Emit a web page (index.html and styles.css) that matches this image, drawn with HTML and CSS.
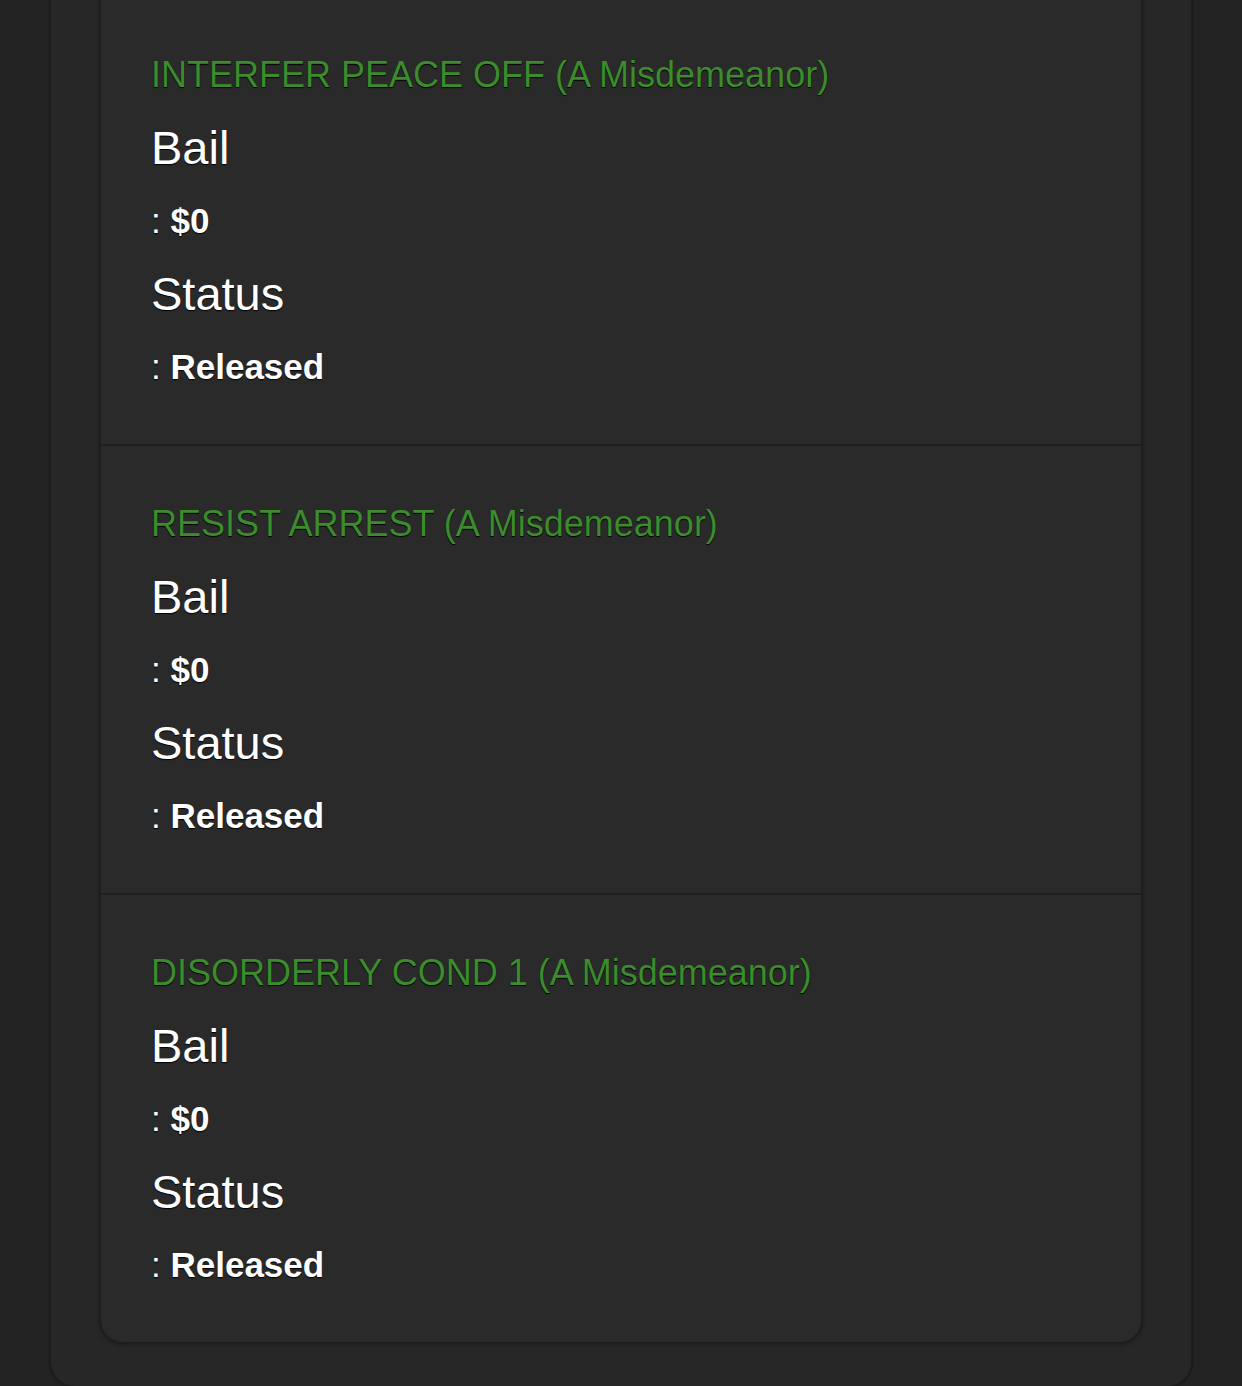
FILE: index.html
```html
<!DOCTYPE html>
<html>
<head>
<meta charset="utf-8">
<link rel="stylesheet" href="styles.css">
</head>
<body>
<div class="panel">
  <div class="card">
    <div class="charge">
      <div class="title">INTERFER PEACE OFF (A Misdemeanor)</div>
      <div class="label">Bail</div>
      <div class="value">: <strong>$0</strong></div>
      <div class="label">Status</div>
      <div class="value">: <strong>Released</strong></div>
    </div>
    <div class="charge">
      <div class="title">RESIST ARREST (A Misdemeanor)</div>
      <div class="label">Bail</div>
      <div class="value">: <strong>$0</strong></div>
      <div class="label">Status</div>
      <div class="value">: <strong>Released</strong></div>
    </div>
    <div class="charge">
      <div class="title">DISORDERLY COND 1 (A Misdemeanor)</div>
      <div class="label">Bail</div>
      <div class="value">: <strong>$0</strong></div>
      <div class="label">Status</div>
      <div class="value">: <strong>Released</strong></div>
    </div>
  </div>
</div>
</body>
</html>
```
FILE: styles.css
```css
html, body {
  margin: 0;
  padding: 0;
  background: #232323;
  font-family: "Liberation Sans", Arial, sans-serif;
}
.panel {
  margin: 0 49px;
  background: #272727;
  border: 2px solid #1c1c1c;
  border-top: none;
  border-radius: 0 0 26px 26px;
  padding: 0 48px 42px;
  box-shadow: 0 0 2px rgba(0,0,0,0.25);
}
.card {
  background: #2a2a2a;
  border: 2px solid #1e1e1e;
  border-top: none;
  border-radius: 0 0 24px 24px;
  box-shadow: 0 1px 4px rgba(0,0,0,0.3);
}
.charge {
  padding: 55px 50px 57px;
  display: flex;
  flex-direction: column;
  gap: 25px;
  text-shadow: 0 1px 1px #000;
}
.charge + .charge {
  border-top: 2px solid #1e1e1e;
  padding-top: 58px;
}
.title {
  font-size: 36px;
  line-height: 40px;
  color: #3c8b2c;
}
.label {
  font-size: 47px;
  line-height: 56px;
  color: #ffffff;
}
.value {
  font-size: 35px;
  line-height: 40px;
  color: #ffffff;
}
.value strong {
  font-weight: bold;
}
```
